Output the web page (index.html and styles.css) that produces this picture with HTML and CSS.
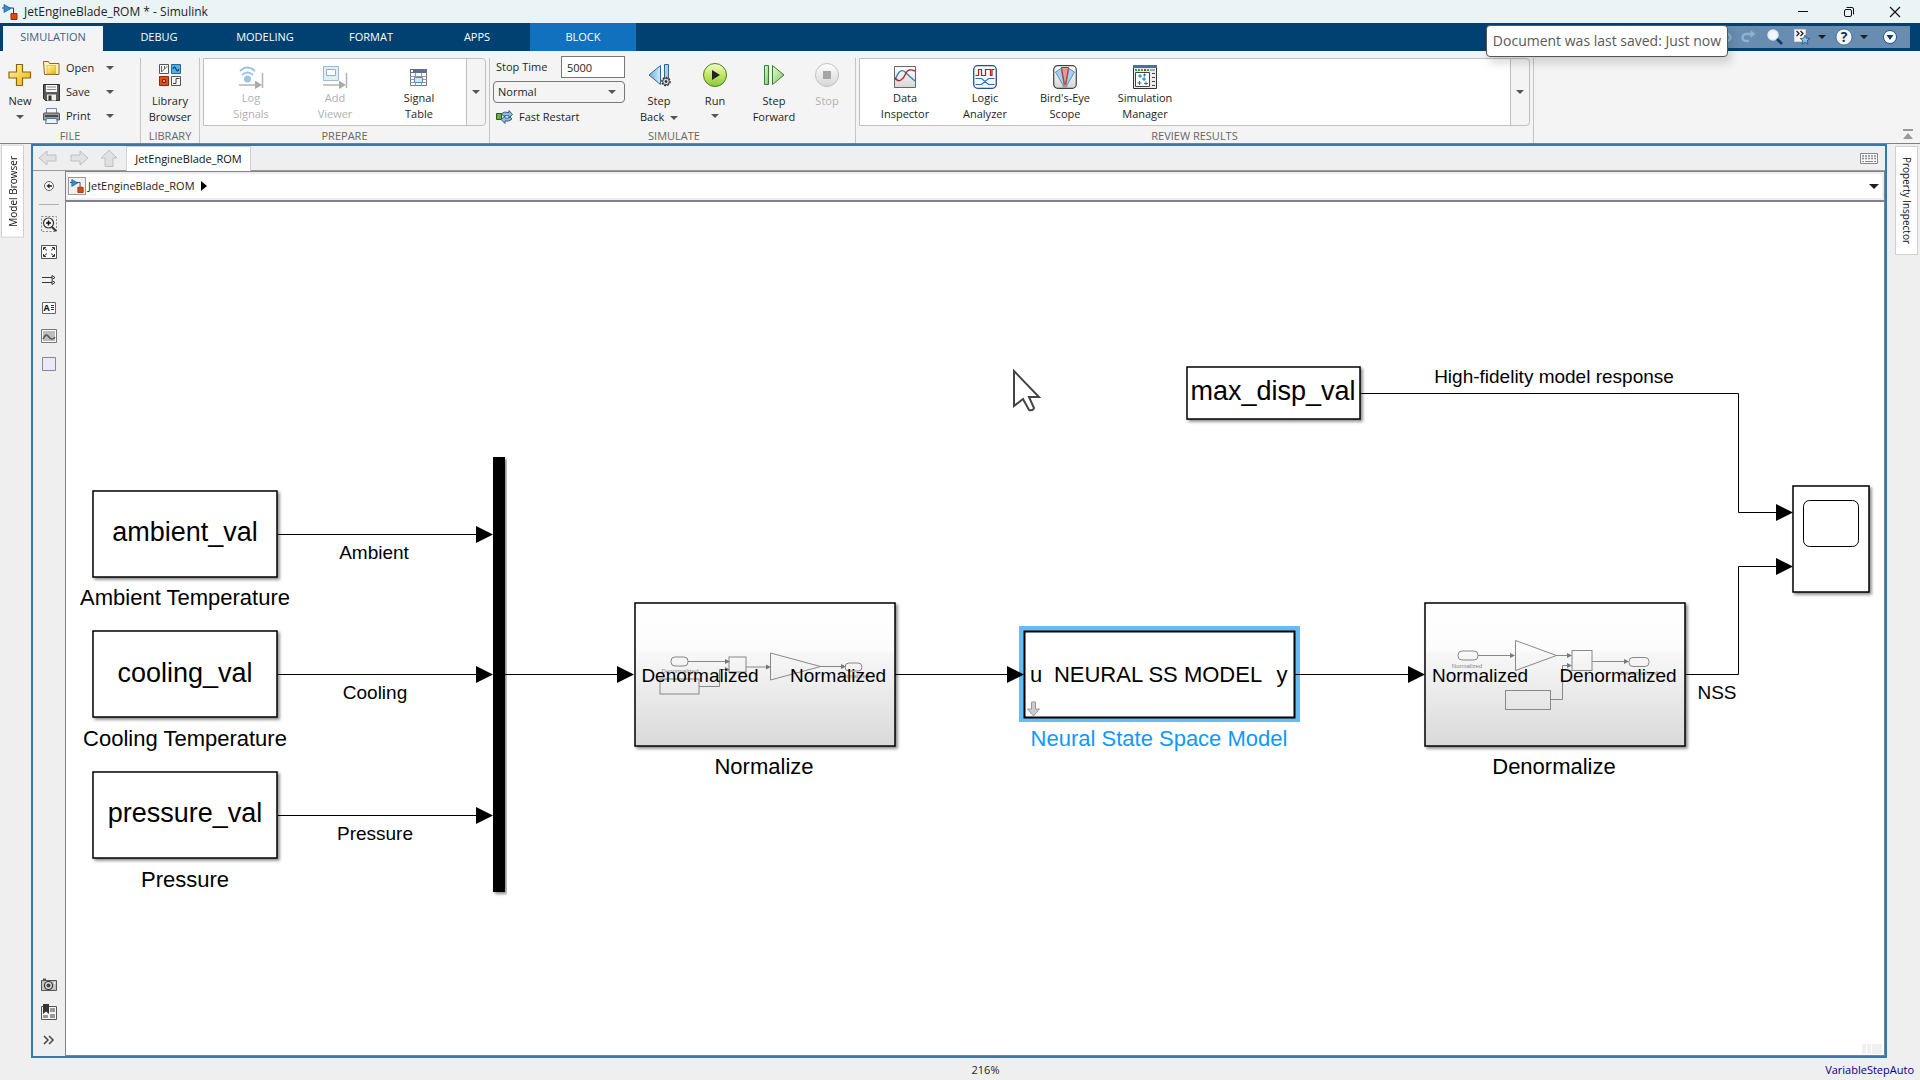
FILE: index.html
```html
<!DOCTYPE html>
<html lang="en">
<head>
<meta charset="utf-8">
<title>JetEngineBlade_ROM * - Simulink</title>
<link rel="stylesheet" href="styles.css">
</head>
<body>
<svg class="defs" width="0" height="0" aria-hidden="true">
  <defs>
    <linearGradient id="gold" x1="0" y1="0" x2="1" y2="1"><stop offset="0" stop-color="#fff6b0"/><stop offset="1" stop-color="#f0b400"/></linearGradient>
    <linearGradient id="blue" x1="0" y1="0" x2="1" y2="0"><stop offset="0" stop-color="#6fb0dd"/><stop offset="1" stop-color="#d3e9f7"/></linearGradient>
    <linearGradient id="green" x1="0" y1="0" x2="1" y2="1"><stop offset="0" stop-color="#e8f8d8"/><stop offset="1" stop-color="#7cc860"/></linearGradient>
    <linearGradient id="lime" x1="0" y1="0" x2="0" y2="1"><stop offset="0" stop-color="#f4fbcf"/><stop offset=".5" stop-color="#c4e668"/><stop offset="1" stop-color="#8cc63a"/></linearGradient>
    <linearGradient id="pale" x1="0" y1="0" x2="0" y2="1"><stop offset="0" stop-color="#ffffff"/><stop offset="1" stop-color="#d6d6d6"/></linearGradient>
    <linearGradient id="subsys" x1="0" y1="0" x2="0" y2="1"><stop offset="0" stop-color="#ffffff"/><stop offset=".33" stop-color="#fcfcfc"/><stop offset=".36" stop-color="#f7f7f7"/><stop offset="1" stop-color="#d9d9d9"/></linearGradient>
    <filter id="shadow" x="-10%" y="-10%" width="125%" height="125%"><feDropShadow dx="2" dy="2" stdDeviation="1.5" flood-color="#000" flood-opacity=".45"/></filter>
    <symbol id="logo" viewBox="0 0 16 16"><path d="M0 4h11.500v6" fill="none" stroke="#2a3f55"/><path d="M2 .5v8l7-4z" fill="#2c8fd0" stroke="#1b5a8c" stroke-width=".7"/><path d="M9 9.500h6v6h-6z" fill="#dd4b1a" stroke="#9b2d0a"/></symbol>
    <symbol id="caret" viewBox="0 0 8 4"><path d="M0 0h8l-4 4z" fill="currentColor"/></symbol>
    <symbol id="caret-lg" viewBox="0 0 10 5"><path d="M0 0h10l-5 5z" fill="currentColor"/></symbol>
  </defs>
</svg>

<header class="titlebar">
  <svg class="app-icon" width="16" height="16"><use href="#logo"/></svg>
  <h1 class="title">JetEngineBlade_ROM * - Simulink</h1>
  <div class="window-controls">
    <button class="win-btn" aria-label="Minimize"><svg width="12" height="12" viewBox="0 0 12 12"><path d="M1 5.500h10" stroke="#111"/></svg></button>
    <button class="win-btn" aria-label="Restore"><svg width="12" height="12" viewBox="0 0 12 12" fill="none" stroke="#111"><rect x="1.500" y="3.500" width="7" height="7" rx="1.500"/><path d="M3.500 1.500h5.500a1.500 1.500 0 0 1 1.500 1.500v5.500"/></svg></button>
    <button class="win-btn" aria-label="Close"><svg width="12" height="12" viewBox="0 0 12 12"><path d="M1 1l10 10M11 1l-10 10" stroke="#111" stroke-width="1.200"/></svg></button>
  </div>
</header>

<nav class="tabstrip">
  <button class="tab tab-active">SIMULATION</button>
  <button class="tab">DEBUG</button>
  <button class="tab">MODELING</button>
  <button class="tab">FORMAT</button>
  <button class="tab">APPS</button>
  <button class="tab tab-context">BLOCK</button>
  <div class="quick">
    <button class="quick-btn" aria-label="Undo"><svg width="16" height="16" viewBox="0 0 16 16"><path d="M6 5h5a3.500 3.500 0 0 1 0 7H8" fill="none" stroke="#8fb2cf" stroke-width="2.500"/><path d="M6.500 1l-5 4 5 4z" fill="#8fb2cf"/></svg></button>
    <button class="quick-btn" aria-label="Redo"><svg width="16" height="16" viewBox="0 0 16 16"><path d="M10 5H5a3.500 3.500 0 0 0 0 7h3" fill="none" stroke="#8fb2cf" stroke-width="2.500"/><path d="M9.500 1l5 4-5 4z" fill="#8fb2cf"/></svg></button>
    <button class="quick-btn" aria-label="Search"><svg width="18" height="18" viewBox="0 0 18 18"><path d="M10 10l6 6" stroke="#0b3a63" stroke-width="2.500"/><circle cx="7" cy="7" r="5" fill="#f2f7fb" stroke="#dfeaf3" stroke-width="1.500"/></svg></button>
    <div class="quick-menu">
      <button class="quick-btn" aria-label="Favorites"><svg width="18" height="18" viewBox="0 0 18 18"><path d="M1.500 1.500h11v12h-11z" fill="#f5f5f5" stroke="#d4d4d4"/><path d="M3.500 3l2.500 2.500-2.500 2.500M7.500 3l2.500 2.500-2.500 2.500" fill="none" stroke="#222" stroke-width="1.300"/><path d="M12 7l1.400 3.200 3.400.3-2.600 2.300.8 3.400-3-1.800-3 1.800.8-3.400L7.200 10.500l3.400-.3z" fill="#8cbfe4" stroke="#244e74" stroke-width=".8"/></svg></button>
      <svg class="quick-caret" width="8" height="4"><use href="#caret"/></svg>
    </div>
    <div class="quick-menu">
      <button class="quick-btn" aria-label="Help"><svg width="18" height="18" viewBox="0 0 18 18"><circle cx="9" cy="9" r="8" fill="#f4f7fa" stroke="#27567f" stroke-width=".7"/><text x="9" y="14" class="glyph-help">?</text></svg></button>
      <svg class="quick-caret" width="8" height="4"><use href="#caret"/></svg>
    </div>
    <button class="quick-btn quick-last" aria-label="Toolstrip options"><svg width="14" height="14" viewBox="0 0 14 14"><circle cx="7" cy="7" r="6.500" fill="#fff" stroke="#1c4e7c"/><path d="M3.500 5h7l-3.500 5z" fill="#004171"/></svg></button>
  </div>
  <div class="tooltip" role="tooltip">Document was last saved: Just now</div>
</nav>

<section class="toolstrip">
  <div class="group group-file">
    <div class="group-body">
      <button class="tool tool-new">
        <svg width="24" height="24" viewBox="0 0 24 24"><path d="M8.500 1.500h6v7.500h8v6h-8v7.500h-6v-7.500h-7.500v-6h7.500z" fill="url(#gold)" stroke="#8a6510" stroke-width="1.200"/></svg>
        <span>New</span>
        <svg class="caret" width="8" height="4"><use href="#caret"/></svg>
      </button>
      <div class="file-rows">
        <button class="file-row"><svg width="17" height="16" viewBox="0 0 17 16"><path d="M.5 1.500h5l1 2h9.500v11H1.500z" fill="#fff2b8" stroke="#8d6b16"/><path d="M4 5.500h8.500v8.500H4z" fill="url(#gold)" stroke="#c69a2a" stroke-width=".5"/></svg><span>Open</span></button>
        <button class="drop" aria-label="Open options"><svg class="caret" width="8" height="4"><use href="#caret"/></svg></button>
        <button class="file-row"><svg width="17" height="17" viewBox="0 0 17 17"><path d="M.5.5h16v16h-14l-2-2z" fill="#5a5a5a" stroke="#2e2e2e"/><path d="M3 1h11v7H3z" fill="#f6f6f6"/><path d="M4 3h9M4 5.500h9" stroke="#888"/><path d="M4 10.500h9v6H4z" fill="#eee"/><path d="M5.500 11.500h3v5h-3z" fill="#333"/></svg><span>Save</span></button>
        <button class="drop" aria-label="Save options"><svg class="caret" width="8" height="4"><use href="#caret"/></svg></button>
        <button class="file-row"><svg width="17" height="16" viewBox="0 0 17 16"><path d="M3.500.5h10v6h-10z" fill="#f4f9fd" stroke="#6f8aa5"/><path d="M.5 6q0-1 1-1h14q1 0 1 1v6h-16z" fill="#9b9b9b" stroke="#555"/><path d="M2 8h13" stroke="#333" stroke-width="1.500"/><path d="M3.500 10.500h10l1 5h-12z" fill="#e9f3fb" stroke="#5478a0"/></svg><span>Print</span></button>
        <button class="drop" aria-label="Print options"><svg class="caret" width="8" height="4"><use href="#caret"/></svg></button>
      </div>
    </div>
    <div class="group-label">FILE</div>
  </div>

  <div class="group group-library">
    <div class="group-body">
      <button class="tool">
        <svg width="24" height="24" viewBox="0 0 24 24"><path d="M1.500 1.500h9v9h-9z" fill="#f6f6f6" stroke="#555"/><path d="M3.500 3v6M3.500 9l6-6M6.500 3v3" stroke="#666" fill="none"/><path d="M13.500 1.500h9v9h-9z" fill="#55b2e6" stroke="#1c6c9c"/><path d="M15 6q1.500-4 3 0t3 0" fill="none" stroke="#0f3e62" stroke-width="1.200"/><path d="M1.500 13.500h9v9h-9z" fill="#e0501f" stroke="#8c2a08"/><path d="M4.500 16.500h3v3h-3z" fill="#f39b72" stroke="#7a2205"/><path d="M13.500 13.500h9v9h-9z" fill="#f6f6f6" stroke="#555"/><path d="M15 20.500h3v-5h3.500" fill="none" stroke="#444"/></svg>
        <span>Library<br>Browser</span>
      </button>
    </div>
    <div class="group-label">LIBRARY</div>
  </div>

  <div class="group group-prepare">
    <div class="gallery">
      <div class="gallery-items">
        <button class="tool tool-prepare" disabled>
          <svg width="26" height="24" viewBox="0 0 26 24" fill="none"><path d="M2 6q7-7 15 0M4 10q5.500-5 11 0" stroke="#9cc4e2" stroke-width="1.800"/><circle cx="9.500" cy="14" r="3.500" fill="#9cc4e2"/><path d="M1 20h17M24.500 8v15" stroke="#b4b4b4" stroke-width="1.500"/><path d="M17 15.500l7 4.500-7 4z" fill="#aaa"/></svg>
          <span>Log<br>Signals</span></button>
        <button class="tool tool-prepare" disabled>
          <svg width="26" height="24" viewBox="0 0 26 24" fill="none"><path d="M1.500 1.500h15v14h-15z" fill="#e2effa" stroke="#9fb9d2"/><path d="M4.500 4.500h9v6h-9z" fill="#fff" stroke="#8fb2d4"/><path d="M1 20h17M24.500 8v15" stroke="#b4b4b4" stroke-width="1.500"/><path d="M17 15.500l7 4.500-7 4z" fill="#aaa"/></svg>
          <span>Add<br>Viewer</span></button>
        <button class="tool tool-prepare">
          <svg width="26" height="24" viewBox="0 0 26 24"><path d="M4.500 4.500h16v16h-16z" fill="#fff" stroke="#777"/><path d="M4 4h17v4H4z" fill="#5d6f8e"/><path d="M5 5h2v2H5z" fill="#fff"/><path d="M4.500 11.500h16M4.500 14.500h16M4.500 17.500h16M9.500 8v12.500M15.500 8v12.500" stroke="#999" fill="none"/><path d="M8.500 12.500h8v5h-8z" fill="#cfe6fa" stroke="#4a8fd0"/></svg>
          <span>Signal<br>Table</span></button>
      </div>
      <button class="gallery-drop" aria-label="More prepare tools"><svg class="caret" width="8" height="4"><use href="#caret"/></svg></button>
    </div>
    <div class="group-label">PREPARE</div>
  </div>

  <div class="group group-simulate">
    <div class="group-body">
      <div class="sim-form">
        <div class="sim-stop"><label for="stop">Stop Time</label><input id="stop" class="sim-input" type="text" value="5000"></div>
        <div class="sim-mode"><select class="sim-select" aria-label="Simulation mode"><option>Normal</option></select><svg class="sim-caret" width="8" height="4"><use href="#caret"/></svg></div>
        <button class="fast"><svg width="17" height="14" viewBox="0 0 17 14"><path d="M.5 3.500h5v6h-5z" fill="#66b043" stroke="#2f5c18"/><path d="M5 4q3-3 8-1.500V.5l3.500 4-3.500 3.500v-2q-3-1-5 0zM16 9q-3 3-7 2v2.500l-4-4 4-3.500v2q3 1 5-1z" fill="#8dbbe0" stroke="#2a5278" stroke-width=".9"/></svg><span>Fast Restart</span></button>
      </div>
      <button class="tool tool-step">
        <svg width="26" height="26" viewBox="0 0 26 26"><path d="M14.500 3.500v19L3 13z" fill="url(#blue)" stroke="#35658e"/><path d="M18.500 2.500h4v15h-4z" fill="#a9cfe9" stroke="#35658e"/><circle cx="20" cy="19.500" r="4" fill="#eee" stroke="#333" stroke-width="1.500" stroke-dasharray="2 1"/><circle cx="20" cy="19.500" r="3.300" fill="#ddd" stroke="#444"/><circle cx="20" cy="19.500" r="1.300" fill="#222"/></svg>
        <span>Step<br>Back&nbsp; <svg class="caret" width="8" height="4"><use href="#caret"/></svg></span></button>
      <button class="tool tool-run">
        <svg width="26" height="26" viewBox="0 0 26 26"><circle cx="13" cy="13" r="11.500" fill="url(#lime)" stroke="#4d7d1e"/><path d="M10 8l8 5-8 5z" fill="#222"/></svg>
        <span>Run</span>
        <svg class="caret" width="8" height="4"><use href="#caret"/></svg></button>
      <button class="tool tool-step">
        <svg width="26" height="26" viewBox="0 0 26 26"><path d="M3.500 3.500h4v19h-4z" fill="url(#green)" stroke="#3c7a35"/><path d="M11.500 3.500v19L23 13z" fill="url(#green)" stroke="#3c7a35"/></svg>
        <span>Step<br>Forward</span></button>
      <button class="tool tool-stop" disabled>
        <svg width="26" height="26" viewBox="0 0 26 26"><circle cx="13" cy="13" r="11.500" fill="url(#pale)" stroke="#c2c2c2"/><path d="M9 9h8v8H9z" fill="#a6a6a6"/></svg>
        <span>Stop</span></button>
    </div>
    <div class="group-label">SIMULATE</div>
  </div>

  <div class="group group-review">
    <div class="gallery">
      <div class="gallery-items">
        <button class="tool tool-review">
          <svg width="24" height="24" viewBox="0 0 24 24" fill="none"><path d="M1.500 1.500h21v21h-21z" fill="url(#pale)" stroke="#666"/><path d="M2 15Q7 2 12 7t10 9" stroke="#3380bd" stroke-width="1.400"/><path d="M2 13q3 4 6 2t5-7 9-2" stroke="#b52828" stroke-width="1.400"/></svg>
          <span>Data<br>Inspector</span></button>
        <button class="tool tool-review">
          <svg width="24" height="24" viewBox="0 0 24 24" fill="none"><rect x=".7" y=".7" width="22.600" height="22.600" rx="4" fill="#f6f9fc" stroke="#2c4f86" stroke-width="1.300"/><path d="M2.500 10.500h3v-6h3v6h4v-6h5v6h1.500v-6h2.500" stroke="#b31d1d" stroke-width="1.200"/><path d="M2.500 13.500h6l7 6h6M2.500 19.500h6l7-6h6" stroke="#2f6fae" stroke-width="1.200"/></svg>
          <span>Logic<br>Analyzer</span></button>
        <button class="tool tool-review">
          <svg width="24" height="24" viewBox="0 0 24 24"><rect x=".7" y=".7" width="22.600" height="22.600" rx="4" fill="url(#pale)" stroke="#444" stroke-width="1.200"/><path d="M10 20L2.500 7 8 3.500l3 16zM14 20l7.500-13L16 3.500l-3 16z" fill="#a5d3f0" stroke="#3d7fb0" stroke-width=".8"/><path d="M8.500 2.500h7l-3 17h-1z" fill="#e79a92" stroke="#c02a20"/><path d="M9.500 19.500h5v3h-5z" fill="#999"/></svg>
          <span>Bird's-Eye<br>Scope</span></button>
        <button class="tool tool-review">
          <svg width="24" height="24" viewBox="0 0 24 24"><path d="M.5.500h23v23H.5z" fill="#ececec" stroke="#333"/><path d="M0 0h24v3H0z" fill="#4b6f96"/><path d="M2 5h20" fill="none" stroke="#16b43c" stroke-width="2" stroke-dasharray="2 1"/><path d="M11 4h2v2h-2z" fill="#d22"/><path d="M17 4h5v2h-5z" fill="#aaa"/><path d="M2.500 7.500h14v14h-14z" fill="#fff" stroke="#444"/><path d="M5 11h4M7 9v4M10 10h3M11.500 8.500v3M9 14h4M11 12v4M4.500 18h4M6.500 16v4M11 18.500h4M13 16.500v3.500" stroke="#1479c4"/><path d="M19 8.500h3M19 12.500h3M19 16.500h3M19 20.500h3" stroke="#444"/></svg>
          <span>Simulation<br>Manager</span></button>
      </div>
      <button class="gallery-drop" aria-label="More review tools"><svg class="caret" width="8" height="4"><use href="#caret"/></svg></button>
    </div>
    <div class="group-label">REVIEW RESULTS</div>
  </div>
  <button class="collapse" aria-label="Collapse toolstrip"><svg width="10" height="10" viewBox="0 0 10 10"><path d="M0 0h10v2H0zM5 4l5 6H0z" fill="#999"/></svg></button>
</section>

<main class="workspace">
  <aside class="gutter"><button class="side-tab side-left">Model Browser</button></aside>

  <section class="editor">
    <div class="doc-bar">
      <button class="nav-btn" aria-label="Back"><svg width="20" height="18" viewBox="0 0 20 18"><path d="M1 9l8-7v4h9v6H9v4z" fill="#e2e2e2" stroke="#c0c0c0"/></svg></button>
      <button class="nav-btn" aria-label="Forward"><svg width="20" height="18" viewBox="0 0 20 18"><path d="M19 9l-8-7v4H2v6h9v4z" fill="#e2e2e2" stroke="#c0c0c0"/></svg></button>
      <button class="nav-btn" aria-label="Up"><svg width="18" height="18" viewBox="0 0 18 18"><path d="M9 1l8 8h-4v8.500H5V9H1z" fill="#e0e0e0" stroke="#c0c0c0"/></svg></button>
      <button class="doc-tab">JetEngineBlade_ROM</button>
      <button class="keys" aria-label="Keyboard"><svg width="18" height="11" viewBox="0 0 18 11"><path d="M.5.500h17v10H.5z" fill="#fafafa" stroke="#888"/><path d="M2 3h14M2 5.500h14" stroke="#888" stroke-width="1.500" stroke-dasharray="2 1"/><path d="M2 8.500h2M5 8.500h8M14 8.500h2" stroke="#888"/></svg></button>
    </div>
    <div class="editor-body">
      <div class="palette">
        <button class="pal-btn" aria-label="Hide browser"><svg width="16" height="16" viewBox="0 0 16 16"><circle cx="8" cy="8" r="4.500" fill="#f6f6f6" stroke="#666"/><path d="M5.500 8l3-2.500v5z" fill="#222"/><path d="M7 8h4" stroke="#222" stroke-width="1.500"/></svg></button>
        <hr class="pal-sep">
        <button class="pal-btn" aria-label="Zoom"><svg width="16" height="16" viewBox="0 0 16 16" fill="none"><path d="M.5.500h15v15H.5z" stroke="#888" stroke-dasharray="2 1.500"/><circle cx="7.500" cy="7" r="5" fill="#fafafa" stroke="#333" stroke-width="1.200"/><path d="M5 7h5M7.500 4.500v5" stroke="#111" stroke-width="1.500"/><path d="M11 11l4 4" stroke="#333" stroke-width="2"/></svg></button>
        <button class="pal-btn" aria-label="Fit to view"><svg width="16" height="14" viewBox="0 0 16 14" fill="none"><path d="M.5.500h15v13H.5z" fill="#fafafa" stroke="#555"/><path d="M2.500 5V2.500H5M11 2.500h2.500V5M13.500 9v2.500H11M5 11.500H2.500V9M3 3l3 2.500M13 3l-3 2.500M3 11l3-2.500M13 11l-3-2.500" stroke="#333"/></svg></button>
        <button class="pal-btn" aria-label="Signal names"><svg width="16" height="12" viewBox="0 0 16 12" fill="none"><path d="M1 3.500h11M1 8.500h11" stroke="#333"/><path d="M11 1.500l3 2-3 2zM11 6.500l3 2-3 2z" fill="#fff" stroke="#333"/></svg></button>
        <button class="pal-btn" aria-label="Annotation"><svg width="14" height="12" viewBox="0 0 14 12"><path d="M.5.500h13v11H.5z" fill="#fff" stroke="#666"/><text x="1.500" y="9" class="glyph-a">A</text><path d="M9 3.500h3M9 5.500h3M9 7.500h3" stroke="#333"/></svg></button>
        <button class="pal-btn" aria-label="Image"><svg width="16" height="14" viewBox="0 0 16 14"><path d="M.5.500h15v13H.5z" fill="#fafafa" stroke="#777"/><path d="M2 2h12v10H2z" fill="#bdbdbd"/><path d="M2 10q3-6 5-3t4 3 3-2" fill="none" stroke="#555" stroke-width="1.500"/></svg></button>
        <button class="pal-btn" aria-label="Area"><svg width="14" height="14" viewBox="0 0 14 14"><path d="M.5.500h13v13H.5z" fill="#e9e9fa" stroke="#888"/></svg></button>
        <button class="pal-btn pal-bottom" aria-label="Screenshot"><svg width="16" height="13" viewBox="0 0 16 13"><path d="M.5 2.500h15v10H.5z" fill="#c4c4c4" stroke="#555"/><path d="M2 .5h3v2H2z" fill="#555"/><circle cx="7.500" cy="7.500" r="4" fill="#ddd" stroke="#333" stroke-width="1.200"/><circle cx="7.500" cy="7.500" r="2" fill="#444"/><path d="M13 4h1.500v2H13z" fill="#eee"/></svg></button>
        <button class="pal-btn" aria-label="Bookmarks"><svg width="16" height="16" viewBox="0 0 16 16"><path d="M.5 2.500h15v13H.5z" fill="#f6f6f6" stroke="#555"/><path d="M9 4h5v4H9zM9 10h5v4H9zM2 11h5v3H2z" fill="#999"/><path d="M2 0h6v10l-3-2.500L2 10z" fill="#333"/></svg></button>
        <button class="pal-btn" aria-label="More"><svg width="12" height="10" viewBox="0 0 12 10" fill="none" stroke="#444" stroke-width="1.500"><path d="M1 1l4 4-4 4M6 1l4 4-4 4"/></svg></button>
      </div>

      <div class="view">
        <div class="crumbs">
          <span class="crumb-icon"><svg width="14" height="14"><use href="#logo"/></svg></span>
          <a class="crumb" href="#">JetEngineBlade_ROM</a>
          <svg width="6" height="10" viewBox="0 0 6 10"><path d="M0 0v10l6-5z"/></svg>
          <button class="crumb-drop" aria-label="Path history"><svg width="10" height="5"><use href="#caret-lg"/></svg></button>
        </div>

        <div class="canvas">
          <svg class="diagram" role="img" aria-label="Jet engine blade model">
            <g transform="translate(-66 -202)">
              <rect class="selection" x="1019" y="626" width="281" height="96"/>
              <g class="wire">
                <path d="M278 534.500h200M278 674.500h200M278 815.500h200M505 674.500h114M895 674.500h114M1295 674.500h114"/>
                <path d="M1360 393.500h378.500v119h40M1685 674.500h53.500v-108h40"/>
              </g>
              <g class="arrow">
                <path d="M476 526l17 8.500-17 8.500zM476 666l17 8.500-17 8.500zM476 807l17 8.500-17 8.500z"/>
                <path d="M617 666l17 8.500-17 8.500zM1007 666l17 8.500-17 8.500zM1408 666l17 8.500-17 8.500z"/>
                <path d="M1776 504l17 8.500-17 8.500zM1776 558l17 8.500-17 8.500z"/>
              </g>

              <rect x="493" y="457" width="12" height="435" filter="url(#shadow)"/>
              <g class="block">
                <rect x="93" y="491" width="184" height="86"/>
                <rect x="93" y="631" width="184" height="86"/>
                <rect x="93" y="772" width="184" height="86"/>
                <rect x="1187" y="367" width="173" height="52"/>
                <rect x="1793" y="486" width="76" height="106"/>
                <rect class="subsystem" x="635" y="603" width="260" height="143"/>
                <rect class="subsystem" x="1425" y="603" width="260" height="143"/>
              </g>
              <rect class="scope-screen" x="1803.500" y="500.500" width="55" height="46" rx="6"/>
              <rect class="block-selected" x="1024.500" y="631.500" width="270" height="86"/>
              <path d="M1031.500 702h4v7h4l-6 7-6-7h4z" fill="#ccc" stroke="#999"/>

              <g class="preview">
                <rect x="671" y="657" width="17" height="9" rx="4"/><path d="M688 661.500h38"/><rect x="729" y="657" width="17" height="15"/><path d="M746 667h22"/><path d="M770.500 653v27l50-13.500z"/><path d="M820 666.500h24"/><rect x="845" y="663" width="17" height="8" rx="4"/><rect x="660" y="679" width="39" height="15"/><path d="M699 686.500h20.500v-17h8"/>
                <path class="preview-arrow" d="M725 659l5 2.500-5 2.500zM725 667l5 2.500-5 2.500zM766 664.500l5 2.500-5 2.500zM841 664l5 2.500-5 2.500z"/>
                <rect x="1458" y="651" width="20" height="9" rx="4"/><path d="M1478 655.500h34"/><path d="M1515.500 640.500v30l41-15z"/><path d="M1556 655.500h14"/><rect x="1572" y="650.500" width="20" height="20"/><path d="M1592 661.500h34"/><rect x="1629" y="657.500" width="20" height="9" rx="4"/><rect x="1505.500" y="690.500" width="45" height="19"/><path d="M1550 699.500h12.500v-34h6"/>
                <path class="preview-arrow" d="M1510 653l5 2.500-5 2.500zM1567 653l5 2.500-5 2.500zM1567 663l5 2.500-5 2.500zM1624 659l5 2.500-5 2.500z"/>
              </g>
              <g class="tiny"><text x="680" y="673">Denormalized</text><text x="854" y="678">Normalized</text><text x="1467" y="668">Normalized</text><text x="1639" y="675">Denormalized</text></g>

              <g class="value">
                <text x="185" y="541">ambient_val</text>
                <text x="185" y="682">cooling_val</text>
                <text x="185" y="822">pressure_val</text>
                <text x="1273" y="400">max_disp_val</text>
              </g>
              <g class="name">
                <text x="185" y="605">Ambient Temperature</text>
                <text x="185" y="746">Cooling Temperature</text>
                <text x="185" y="887">Pressure</text>
                <text x="764" y="774">Normalize</text>
                <text x="1554" y="774">Denormalize</text>
                <text x="1159" y="746" class="name-selected">Neural State Space Model</text>
                <text x="1158" y="682">NEURAL SS MODEL</text>
                <text x="1036" y="682">u</text>
                <text x="1282" y="682">y</text>
              </g>
              <g class="signal">
                <text x="374" y="559">Ambient</text>
                <text x="375" y="699">Cooling</text>
                <text x="375" y="840">Pressure</text>
                <text x="1554" y="383">High-fidelity model response</text>
                <text x="1717" y="699">NSS</text>
                <text x="700" y="682">Denormalized</text>
                <text x="838" y="682">Normalized</text>
                <text x="1480" y="682">Normalized</text>
                <text x="1618" y="682">Denormalized</text>
              </g>
              <path class="pointer" d="M1014 371v35l9-7 6 11q4 1 5-2l-5-11h10z"/>
            </g>
          </svg>
          <svg class="grip" width="20" height="10"><path d="M0 0h4v10H0zM5 0h4v10H5zM10 0h10v10H10z" fill="#f0f0f0"/></svg>
        </div>
      </div>
    </div>
  </section>

  <aside class="gutter gutter-right"><button class="side-tab">Property Inspector</button></aside>
</main>

<footer class="status">
  <span></span>
  <span class="zoom">216%</span>
  <a class="solver" href="#">VariableStepAuto</a>
</footer>
</body>
</html>
```

FILE: styles.css
```css
* { box-sizing: border-box; }

body {
  margin: 0;
  min-height: 100vh;
  display: flex;
  flex-direction: column;
  background: #efefef;
  color: #1e1e1e;
  font: 11px/16px "Open Sans", "Noto Sans", sans-serif;
}

button, input, select { font: inherit; color: inherit; }
button { margin: 0; padding: 0; border: 0; background: none; }
a { color: inherit; text-decoration: none; }
svg { flex: none; }
.defs { position: absolute; }
.caret { color: #555; }

/* Title bar */
.titlebar { display: flex; align-items: center; height: 23px; padding: 0 2px; background: #eaf4f7; }
.title { margin: 0 auto 0 6px; font-size: 12px; font-weight: 400; color: #222; }
.window-controls { display: flex; }
.win-btn { display: flex; align-items: center; justify-content: center; width: 46px; height: 20px; }

/* Ribbon tabs */
.tabstrip { position: relative; z-index: 1; display: flex; height: 28px; background: #004171; }
.tab { width: 106px; color: #fff; }
.tab-active { width: 100px; margin: 3px 3px 0; padding-bottom: 3px; background: #f4f4f4; color: #3d5f85; }
.tab-context { background: #1171bf; }
.quick { display: flex; align-items: center; gap: 9px; height: 22px; margin: 3px 10px 0 auto; padding: 0 13px; background: #688db0; }
.quick-btn { display: flex; }
.quick-menu { display: flex; align-items: center; gap: 7px; }
.quick-last { margin-left: 6px; }
.tooltip {
  position: absolute;
  top: 2px;
  right: 192px;
  padding: 5px 6px;
  border: 1px solid #555;
  border-radius: 4px;
  background: #fff;
  color: #5a5a5a;
  font-size: 14px;
  line-height: 20px;
  white-space: nowrap;
  box-shadow: 3px 6px 10px rgba(0, 0, 0, .15);
}
.glyph-help { font: 700 14px "Open Sans", sans-serif; text-anchor: middle; fill: #0f3557; }
.glyph-a { font: 700 9px "Open Sans", sans-serif; fill: #111; }

/* Toolstrip */
.toolstrip { position: relative; display: flex; height: 93px; border-bottom: 1px solid #808080; background: #f4f4f4; }
.group { display: flex; flex-direction: column; padding-top: 5px; border-right: 1px solid #c4c4c4; border-image: linear-gradient(transparent 8px, #c4c4c4 8px) 1; }
.group-body { display: flex; flex: 1; }
.group-label { height: 14px; line-height: 14px; color: #666; text-align: center; }
.group-file { width: 141px; }
.group-library { width: 59px; }
.group-prepare { width: 290px; padding-left: 3px; padding-right: 3px; }
.group-simulate { width: 366px; padding-left: 3px; }
.group-review { width: 678px; padding-left: 3px; padding-right: 3px; }

.tool { display: flex; flex-direction: column; align-items: center; gap: 6px; padding-top: 7px; white-space: nowrap; }
.tool:disabled { color: #b0b0b0; }
.tool .caret { display: inline-block; vertical-align: middle; }
.tool-new { width: 40px; }
.group-library .tool { width: 58px; }
.tool-step, .tool-run, .tool-stop { gap: 5px; padding-top: 6px; }
.tool-step { width: 62px; }
.tool-run { width: 50px; margin-right: 3px; }
.tool-stop { width: 44px; }

.file-rows { display: grid; grid-template: repeat(3, 24px) / auto 20px; justify-content: start; column-gap: 6px; padding-left: 3px; }
.file-row { display: flex; align-items: center; gap: 6px; }
.drop { display: flex; align-items: center; justify-content: center; }

.gallery { display: flex; height: 68px; margin: 2px 0 3px; border: 1px solid #c0c0c0; border-radius: 0 4px 4px 0; }
.gallery-items { display: flex; flex: 1; padding: 0 5px; background: #fff; }
.gallery .tool { gap: 1px; padding-top: 6px; }
.tool-prepare { width: 84px; }
.tool-review { width: 80px; }
.gallery-drop { width: 19px; border-left: 1px solid #c0c0c0; }
.gallery-drop svg { display: block; margin: auto; }

.sim-form { width: 132px; margin-right: 3px; }
.sim-stop { display: flex; align-items: center; justify-content: space-between; padding-left: 3px; }
.sim-input { width: 64px; height: 22px; padding: 0 5px; border: 1px solid #777; background: #fff; }
.sim-mode { position: relative; margin: 3px 0; }
.sim-select { display: block; width: 100%; height: 22px; padding: 0 4px; border: 1px solid #777; border-radius: 4px; background: #f4f4f4; appearance: none; }
.sim-caret { position: absolute; top: 9px; right: 9px; color: #555; }
.fast { display: flex; align-items: center; gap: 6px; height: 22px; padding-left: 3px; }
.collapse { position: absolute; right: 7px; bottom: 4px; height: 10px; display: flex; }

/* Workspace */
.workspace { display: flex; flex: 1; }
.gutter { width: 31px; padding: 1px 1px; }
.gutter-right { width: 33px; padding: 2px 2px 2px 8px; }
.side-tab { width: 23px; padding: 10px 0; border: 1px solid #d0d0d0; background: #fff; color: #111; font-size: 10px; writing-mode: vertical-rl; }
.side-left { transform: rotate(180deg); }

.editor { display: flex; flex: 1; flex-direction: column; min-width: 0; border: 2px solid #3578ae; }
.doc-bar { display: flex; align-items: stretch; gap: 11px; height: 25px; padding-left: 5px; border-bottom: 1px solid #999; }
.nav-btn { display: flex; align-items: center; }
.doc-tab { width: 125px; margin: 0 auto -1px -3px; border: solid #d0d0d0; border-width: 1px 1px 0; background: #fff; color: #111; }
.keys { display: flex; align-items: center; margin-right: 7px; }

.editor-body { display: flex; flex: 1; }
.palette { display: flex; flex-direction: column; align-items: center; width: 32px; padding: 1px 0 2px; }
.pal-btn { display: flex; align-items: center; justify-content: center; width: 28px; height: 28px; }
.pal-sep { width: 20px; height: 1px; margin: 4px 0 5px; border: 0; background: #b0b0b0; }
.pal-bottom { margin-top: auto; }

.view { display: flex; flex: 1; flex-direction: column; min-width: 0; border: 1px solid #808090; }
.crumbs { display: flex; align-items: center; gap: 6px; height: 30px; padding: 0 2px; border-bottom: 2px solid #808090; box-shadow: inset 0 0 0 2px #eee; background: #fff; }
.crumb-icon { display: flex; padding: 1px; border: 1px solid #999; background: #f0f0f0; margin-right: -4px; }
.crumb { color: #222; }
.crumb-drop { display: flex; margin: 0 3px 0 auto; }

.canvas { position: relative; display: flex; flex: 1; background: #fff; }
.diagram { position: absolute; inset: 0; width: 100%; height: 100%; font-family: "Liberation Sans", Arial, sans-serif; }
.grip { position: absolute; right: 2px; bottom: 1px; }

/* Diagram */
.wire path { fill: none; stroke: #000; }
.block rect { fill: #fff; stroke: #000; stroke-width: 1.5px; filter: url(#shadow); }
.block .subsystem { fill: url(#subsys); }
.block-selected { fill: #fff; stroke: #000; stroke-width: 2px; }
.selection { fill: #62bdfb; }
.scope-screen { fill: none; stroke: #000; }
.preview rect, .preview path { fill: none; stroke: #888; }
.preview .preview-arrow { fill: #777; stroke: none; }
.diagram text { text-anchor: middle; }
.value { font-size: 27px; }
.name { font-size: 22px; }
.signal { font-size: 19px; }
.tiny { font-size: 6px; fill: #888; }
.name-selected { fill: #0d99ff; }
.pointer { fill: #fff; stroke: #444; stroke-width: 2px; }

/* Status bar */
.status { display: grid; grid-template-columns: 1fr auto 1fr; align-items: center; height: 22px; padding: 1px 6px 0 57px; }
.status .zoom { grid-column: 2; }
.solver { justify-self: end; color: #00008b; }
```
